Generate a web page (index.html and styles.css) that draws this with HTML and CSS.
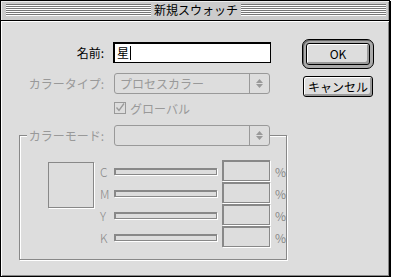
FILE: index.html
```html
<!DOCTYPE html>
<html lang="ja">
<head>
    <meta charset="UTF-8">
    <title>新規スウォッチ</title>
    <link rel="stylesheet" href="styles.css">
</head>
<body>
    <div class="window">
        <div class="titlebar">
            <span class="stripes"></span>
            <span class="title">新規スウォッチ</span>
            <span class="stripes"></span>
        </div>

        <div class="content">
            <div class="form">
                <!-- Name -->
                <div class="row row-name">
                    <span class="label">名前:</span>
                    <div class="textfield">星<span class="caret"></span></div>
                </div>

                <!-- Color type -->
                <div class="row row-type">
                    <span class="label disabled">カラータイプ:</span>
                    <div class="popup">
                        <span class="popup-text">プロセスカラー</span>
                        <span class="popup-arrows">
                            <svg width="7" height="9" viewBox="0 0 7 9"><path d="M3.5 0L7 4H0Z M0 5H7L3.5 9Z" fill="#999"/></svg>
                        </span>
                    </div>
                </div>

                <!-- Global -->
                <div class="row row-check">
                    <span class="checkbox">
                        <svg width="12" height="12" viewBox="0 0 12 12">
                            <rect x="0.5" y="0.5" width="11" height="11" fill="none" stroke="#999"/>
                            <path d="M2.5 5.5L5 8.5L10 1.5" fill="none" stroke="#999" stroke-width="1.3"/>
                        </svg>
                    </span>
                    <span class="check-label disabled">グローバル</span>
                </div>

                <!-- Color mode group -->
                <fieldset class="group">
                    <legend class="group-head">
                        <span class="group-label disabled">カラーモード:</span>
                        <span class="popup">
                            <span class="popup-text"></span>
                            <span class="popup-arrows">
                                <svg width="7" height="9" viewBox="0 0 7 9"><path d="M3.5 0L7 4H0Z M0 5H7L3.5 9Z" fill="#999"/></svg>
                            </span>
                        </span>
                    </legend>
                    <div class="group-body">
                        <div class="preview"></div>
                        <div class="sliders">
                            <div class="slider-row">
                                <span class="slider-name">C</span>
                                <span class="track"></span>
                                <span class="value"></span>
                                <span class="pct">%</span>
                            </div>
                            <div class="slider-row">
                                <span class="slider-name">M</span>
                                <span class="track"></span>
                                <span class="value"></span>
                                <span class="pct">%</span>
                            </div>
                            <div class="slider-row">
                                <span class="slider-name">Y</span>
                                <span class="track"></span>
                                <span class="value"></span>
                                <span class="pct">%</span>
                            </div>
                            <div class="slider-row">
                                <span class="slider-name">K</span>
                                <span class="track"></span>
                                <span class="value"></span>
                                <span class="pct">%</span>
                            </div>
                        </div>
                    </div>
                </fieldset>
            </div>

            <div class="buttons">
                <div class="default-ring"><button class="btn btn-ok">OK</button></div>
                <button class="btn btn-cancel">キャンセル</button>
            </div>
        </div>
    </div>
</body>
</html>
```

FILE: styles.css
```css
body {
    margin: 0;
    background-color: #fff;
    font-family: "Noto Sans CJK JP", "DejaVu Sans", sans-serif;
    font-size: 12px;
    color: #000;
}
.window {
    width: 390px;
    height: 277px;
    box-sizing: border-box;
    border: 1px solid #000;
    box-shadow: 1px 1px 0 #000;
    background-color: #ddd;
    display: flex;
    flex-direction: column;
}
.titlebar {
    height: 20px;
    box-sizing: border-box;
    border-bottom: 1px solid #000;
    padding: 3px 3px 0 5px;
    display: flex;
    background-color: #ccc;
    box-shadow: inset 1px 1px 0 #eee, inset -1px 0 0 #999;
}
.stripes {
    flex: 1;
    height: 12px;
    background: repeating-linear-gradient(to bottom, #777 0 1px, #fff 1px 2px);
}
.title {
    padding: 0 3px;
    height: 12px;
    line-height: 12px;
    white-space: nowrap;
}
.content {
    flex: 1;
    display: flex;
    box-shadow: inset 1px 1px 0 #fff, inset -1px -1px 0 #888;
}
.form {
    width: 299px;
    padding-top: 21px;
}
.row {
    display: flex;
    align-items: center;
}
.label {
    width: 112px;
    box-sizing: border-box;
    padding-right: 9px;
    text-align: right;
    white-space: nowrap;
}
.disabled {
    color: #999;
}
.textfield {
    width: 158px;
    height: 21px;
    box-sizing: border-box;
    border: 1px solid #000;
    background-color: #fff;
    box-shadow: inset 1px 1px 0 #000;
    display: flex;
    align-items: center;
    padding-left: 3px;
    line-height: 14px;
}
.caret {
    width: 1px;
    height: 14px;
    background-color: #000;
    margin-left: 1px;
}
.row-type {
    margin-top: 10px;
}
.popup {
    width: 156px;
    height: 21px;
    box-sizing: border-box;
    margin-left: 1px;
    border: 1px solid #999;
    border-radius: 3px;
    display: flex;
    align-items: center;
    color: #999;
}
.popup-text {
    flex: 1;
    padding-left: 5px;
    white-space: nowrap;
}
.popup-arrows {
    width: 19px;
    height: 100%;
    border-left: 1px solid #999;
    display: flex;
    align-items: center;
    justify-content: center;
}
.popup-arrows svg {
    display: block;
}
.row-check {
    margin-top: 8px;
    padding-left: 113px;
    height: 12px;
}
.checkbox svg {
    display: block;
}
.check-label {
    margin-left: 4px;
}
.group {
    margin: 11px 0 0 18px;
    padding: 0;
    min-inline-size: 0;
    width: 268px;
    box-sizing: border-box;
    border: 1px solid #888;
    box-shadow: 1px 1px 0 #fff, inset 1px 1px 0 #fff;
}
.group-head {
    margin-left: 7px;
    padding: 0;
    display: flex;
    align-items: center;
    background-color: #ddd;
}
.group-label {
    width: 86px;
    box-sizing: border-box;
    padding-right: 9px;
    text-align: right;
    white-space: nowrap;
}
.group-body {
    display: flex;
    align-items: flex-start;
    padding: 14px 0 11px 28px;
}
.preview {
    width: 46px;
    height: 46px;
    box-sizing: border-box;
    margin-top: 2px;
    border: 1px solid #888;
    box-shadow: 1px 1px 0 #fff;
}
.sliders {
    margin-left: 6px;
}
.slider-row {
    display: flex;
    align-items: center;
    height: 22px;
}
.slider-name {
    width: 14px;
    color: #888;
    font-weight: 300;
}
.track {
    width: 103px;
    height: 7px;
    box-sizing: border-box;
    border: 2px solid #888;
    border-right-width: 1px;
    border-bottom-width: 1px;
    box-shadow: 1px 1px 0 #fff;
}
.value {
    width: 48px;
    height: 21px;
    box-sizing: border-box;
    align-self: flex-start;
    margin-left: 5px;
    border: 2px solid #888;
    border-right-width: 1px;
    border-bottom-width: 1px;
    box-shadow: 1px 1px 0 #fff;
}
.pct {
    margin-left: 5px;
    color: #888;
    font-size: 12px;
}
.buttons {
    width: 76px;
    padding-top: 18px;
    display: flex;
    flex-direction: column;
    align-items: center;
}
.default-ring {
    width: 72px;
    height: 30px;
    box-sizing: border-box;
    border: 1px solid #000;
    border-radius: 7px;
    padding: 3px;
    background-color: #aaa;
    box-shadow: inset 1px 1px 0 #666;
}
.btn {
    font-family: "Noto Sans CJK JP", "DejaVu Sans", sans-serif;
    font-size: 12px;
    color: #000;
    background-color: #ddd;
    border: 1px solid #000;
    border-radius: 3px;
    box-shadow: inset 1px 1px 0 #fff, inset -2px -2px 0 #999;
    padding: 0;
    line-height: 1;
}
.btn-ok {
    width: 64px;
    height: 22px;
    display: block;
}
.btn-cancel {
    width: 70px;
    height: 21px;
    margin-top: 7px;
}
```
